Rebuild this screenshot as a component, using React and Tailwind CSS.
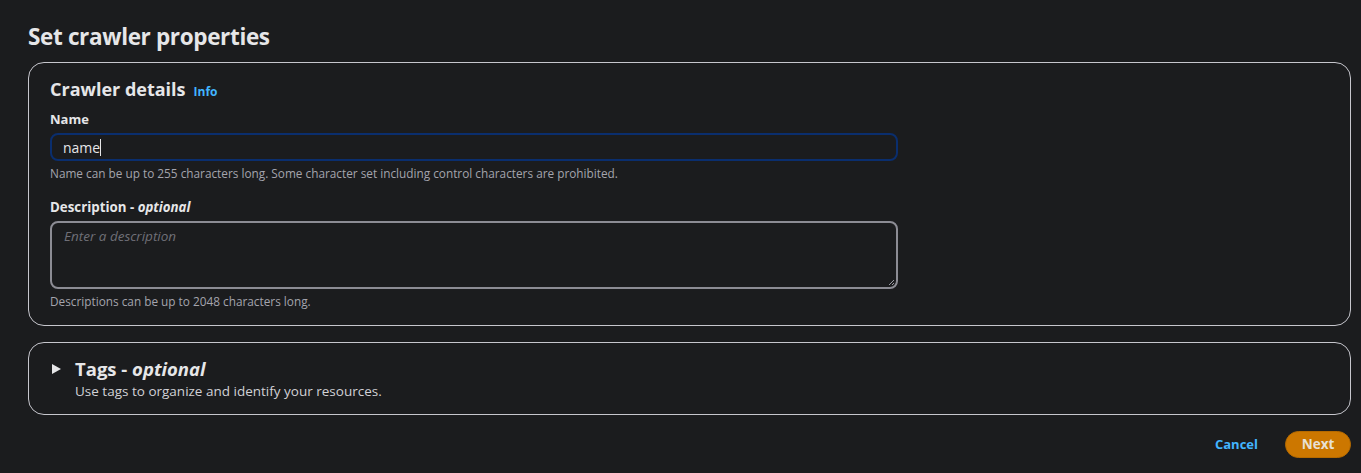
export default function App() {
  return (
    <div className="min-h-screen bg-[#1b1c1e] text-[#e8e8ea] font-['Open_Sans',sans-serif] pl-[28px] pr-[10px] pt-[20px] pb-[16px]">
      <h1 className="text-[22.5px] leading-[34px] font-bold tracking-[-0.35px] text-[#e6e6e8] mb-[8px]">Set crawler properties</h1>

      {/* Crawler details */}
      <div className="border border-[#c6c6cd] rounded-[16px] pl-[21px] pr-[20px] pt-[13px] pb-[16px]">
        <div className="flex items-baseline gap-[8px]">
          <h2 className="text-[18px] leading-[26px] font-bold text-[#e6e6e8]">Crawler details</h2>
          <span className="text-[12px] font-bold text-[#42b4ff]">Info</span>
        </div>

        <div className="mt-[7px] w-[848px]">
          <label className="block text-[13px] leading-[20px] font-bold text-[#e6e6e8] mb-[4px]">Name</label>
          <div className="h-[28px] rounded-[8px] border-2 border-[#0a2e6e] flex items-center pl-[11px] text-[14px] text-[#e6e6e8]">
            <span>name</span>
            <span className="w-px h-[17px] bg-[#e6e6e8]"></span>
          </div>
          <p className="text-[11.8px] leading-[16px] text-[#a4a4ad] mt-[4px]">
            Name can be up to 255 characters long. Some character set including control characters are prohibited.
          </p>

          <label className="block text-[13.3px] leading-[20px] font-bold text-[#e6e6e8] mt-[16px] mb-[4px]">
            Description - <i>optional</i>
          </label>
          <div className="relative h-[68px] rounded-[8px] border-2 border-[#8c8c94] pl-[12px] pt-[2px] leading-[20px]">
            <span className="text-[13.5px] italic text-[#6f6f77]">Enter a description</span>
            <svg className="absolute right-[2px] bottom-[2px]" width="6" height="6" viewBox="0 0 6 6">
              <path d="M1 6 L6 1 M4 6 L6 4" stroke="#9a9aa2" strokeWidth="1" />
            </svg>
          </div>
          <p className="text-[11.8px] leading-[16px] text-[#a4a4ad] mt-[4px]">Descriptions can be up to 2048 characters long.</p>
        </div>
      </div>

      {/* Tags */}
      <div className="mt-[16px] border border-[#c6c6cd] rounded-[16px] pl-[23px] pr-[20px] pt-[14px] pb-[13px] flex gap-[14px]">
        <svg className="mt-[7px] shrink-0" width="9" height="10" viewBox="0 0 9 10">
          <path d="M0 0 L9 5 L0 10 Z" fill="#e6e6e8" />
        </svg>
        <div>
          <h2 className="text-[18.5px] leading-[24px] font-bold text-[#e6e6e8]">
            Tags - <i>optional</i>
          </h2>
          <p className="text-[13.5px] leading-[20px] text-[#d1d1d6]">Use tags to organize and identify your resources.</p>
        </div>
      </div>

      <div className="flex justify-end items-center gap-[27px] mt-[16px]">
        <button className="text-[13px] font-bold text-[#42b4ff]">Cancel</button>
        <button className="h-[27px] w-[66px] rounded-full bg-[#cc7700] text-[13.5px] font-bold text-[#e8e0d4] border border-[#b56a00]">Next</button>
      </div>
    </div>
  )
}
